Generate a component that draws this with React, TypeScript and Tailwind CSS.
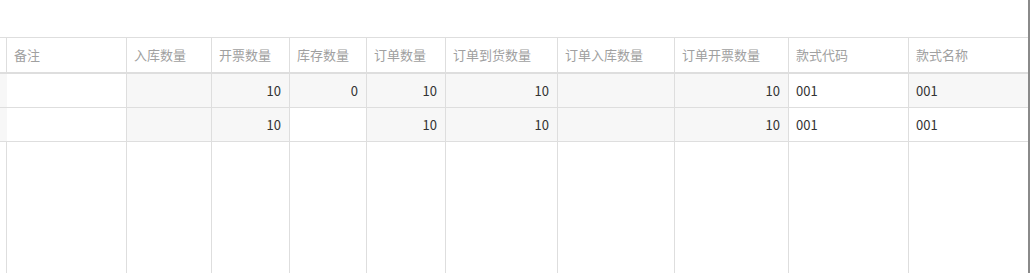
import React from "react";

type Col = { key: string; title: string; width: string; align: "left" | "right"; readOnly: boolean };

const columns: Col[] = [
  { key: "lead", title: "", width: "w-[7px]", align: "left", readOnly: true },
  { key: "remark", title: "备注", width: "w-[120px]", align: "left", readOnly: false },
  { key: "inQty", title: "入库数量", width: "w-[85px]", align: "right", readOnly: true },
  { key: "invoiceQty", title: "开票数量", width: "w-[78px]", align: "right", readOnly: true },
  { key: "stockQty", title: "库存数量", width: "w-[77px]", align: "right", readOnly: false },
  { key: "orderQty", title: "订单数量", width: "w-[79px]", align: "right", readOnly: true },
  { key: "orderArrived", title: "订单到货数量", width: "w-[112px]", align: "right", readOnly: true },
  { key: "orderIn", title: "订单入库数量", width: "w-[117px]", align: "right", readOnly: true },
  { key: "orderInvoice", title: "订单开票数量", width: "w-[114px]", align: "right", readOnly: true },
  { key: "styleCode", title: "款式代码", width: "w-[120px]", align: "left", readOnly: false },
  { key: "styleName", title: "款式名称", width: "w-[119px]", align: "left", readOnly: false },
];

const rows: Record<string, string>[] = [
  { invoiceQty: "10", stockQty: "0", orderQty: "10", orderArrived: "10", orderInvoice: "10", styleCode: "001", styleName: "001" },
  { invoiceQty: "10", orderQty: "10", orderArrived: "10", orderInvoice: "10", styleCode: "001", styleName: "001" },
];

export default function App() {
  return (
    <div
      className="flex h-[273px] w-[1030px] bg-white text-[13px]"
      style={{ fontFamily: '"Noto Sans CJK SC", "Noto Sans", sans-serif' }}
    >
      <div className="flex flex-1 flex-col">
        <div className="h-[37px]" />
        <div className="flex flex-1 border-t border-[#dedede]">
          {columns.map((col, i) => (
            <div
              key={col.key}
              className={`flex flex-col ${col.width} ${i < columns.length - 1 ? "border-r border-[#dedede]" : ""}`}
            >
              <div className="flex h-[36px] items-center border-b-2 border-[#dedede] pl-[7px] pr-2 text-[#a0a0a0] whitespace-nowrap overflow-hidden">
                {col.title}
              </div>
              {rows.map((row, r) => {
                const gray = col.readOnly || (r === 0 && col.key !== "remark" && col.key !== "styleCode");
                return (
                  <div
                    key={r}
                    className={`flex h-[34px] items-center border-b border-[#dedede] pl-[7px] pr-2 text-[#333] ${
                      col.align === "right" ? "justify-end" : "justify-start"
                    } ${gray ? "bg-[#f7f7f7]" : "bg-white"}`}
                  >
                    {row[col.key] ?? ""}
                  </div>
                );
              })}
              <div className="flex-1" />
            </div>
          ))}
        </div>
      </div>
      <div className="w-[2px] bg-[#8a8a8a]" />
    </div>
  );
}
